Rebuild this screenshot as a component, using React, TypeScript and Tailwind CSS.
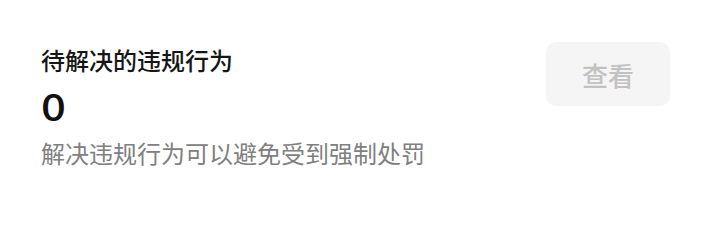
export default function App() {
  return (
    <div
      className="w-[710px] h-[220px] bg-white"
      style={{ fontFamily: '"Noto Sans CJK SC", "Noto Sans", sans-serif' }}
    >
      <div className="flex items-start justify-between pl-[41px] pr-[40px] pt-[42px]">
        <div className="flex flex-col">
          <div className="text-[24px] leading-[36px] font-medium text-[#161616]">待解决的违规行为</div>
          <div className="text-[38px] leading-[48px] font-medium text-[#111111] mt-[3px]">
            <span className="inline-block origin-left scale-x-[1.15]">0</span>
          </div>
          <div className="text-[24px] leading-[34px] text-[#808080] mt-[7px]">解决违规行为可以避免受到强制处罚</div>
        </div>
        <button className="w-[124px] h-[64px] rounded-[10px] bg-[#f5f5f5] text-[26px] text-[#c2c2c2] font-medium flex items-center justify-center">
          查看
        </button>
      </div>
    </div>
  );
}
